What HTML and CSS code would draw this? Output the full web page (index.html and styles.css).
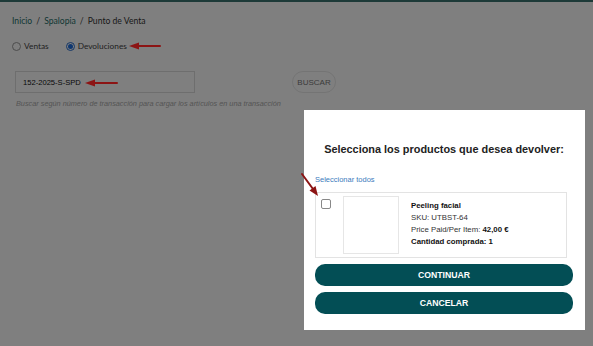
FILE: index.html
```html
<!DOCTYPE html>
<html lang="es">
<head>
<meta charset="utf-8">
<title>Punto de Venta</title>
<link rel="stylesheet" href="styles.css">
</head>
<body>
<div class="topbar"></div>
<main class="page">
  <nav class="crumbs">
    <a href="#">Inicio</a><span class="sep">/</span><a href="#">Spalopia</a><span class="sep">/</span><span class="current">Punto de Venta</span>
  </nav>
  <div class="mode">
    <label class="opt"><input type="radio" name="mode"> Ventas</label>
    <label class="opt"><input type="radio" name="mode" checked> Devoluciones</label>
  </div>
  <div class="search">
    <div class="field">152-2025-S-SPD</div>
    <button class="buscar">BUSCAR</button>
  </div>
  <p class="hint">Buscar según número de transacción para cargar los artículos en una transacción</p>
</main>
<div class="overlay"></div>
<section class="modal">
  <h2 class="title">Selecciona los productos que desea devolver:</h2>
  <a class="select-all" href="#">Seleccionar todos</a>
  <div class="item">
    <input class="check" type="checkbox">
    <div class="thumb"></div>
    <div class="info">
      <div class="name">Peeling facial</div>
      <div>SKU: UTBST-64</div>
      <div>Price Paid/Per Item: <b>42,00 €</b></div>
      <div class="qty">Cantidad comprada: 1</div>
    </div>
  </div>
  <button class="btn">CONTINUAR</button>
  <button class="btn">CANCELAR</button>
</section>
<svg class="annot" width="593" height="346" viewBox="0 0 593 346">
  <g stroke="#8c1414" stroke-width="2" fill="#8c1414" stroke-linecap="round">
    <line x1="160" y1="46" x2="137" y2="46"/>
    <polygon points="129,46 139,42.5 139,49.5" stroke="none"/>
    <line x1="117" y1="83" x2="93" y2="83"/>
    <polygon points="85,83 95,79.5 95,86.5" stroke="none"/>
    <line x1="302" y1="174" x2="313" y2="189"/>
    <polygon points="318,196 309.5,190.5 315.5,186" stroke="none"/>
  </g>
</svg>
</body>
</html>
```
FILE: styles.css
```css
* { box-sizing: border-box; }
html, body { margin: 0; padding: 0; }
body {
  width: 593px;
  height: 346px;
  overflow: hidden;
  background: #fff;
  font-family: "Lato", "Open Sans", sans-serif;
  color: #333;
  position: relative;
}
.topbar { height: 2px; background: #3a7571; }
.page { padding: 13px 12px 0 12px; }
.crumbs { font-size: 8.6px; line-height: 12px; display: flex; align-items: center; }
.crumbs a { color: #256e67; text-decoration: none; }
.crumbs .sep { margin: 0 4px; color: #444; }
.crumbs .current { color: #333; }
.mode { display: flex; gap: 17px; margin-top: 13px; font-size: 8.3px; line-height: 12px; }
.opt { display: flex; align-items: center; gap: 3px; color: #444; }
.opt input {
  appearance: none; -webkit-appearance: none;
  width: 9px; height: 9px; margin: 0;
  border: 1px solid #999; border-radius: 50%; background: #fff;
  position: relative;
}
.opt input:checked { border-color: #2a6fd0; }
.opt input:checked::after {
  content: ""; position: absolute; left: 1px; top: 1px;
  width: 5px; height: 5px; border-radius: 50%; background: #1f6fe0;
}
.search { display: flex; align-items: center; margin-top: 19px; padding-left: 3px; }
.field {
  width: 180px; height: 22px; padding-left: 7px;
  border: 1px solid #dcdcdc; background: #fff;
  font-family: "Liberation Sans", Arial, sans-serif; font-size: 7.6px; color: #111;
  display: flex; align-items: center;
}
.buscar {
  margin-left: 97px; height: 22px; width: 44px; padding: 0;
  border: 1px solid #e8e8e8; border-radius: 11px; background: #fff;
  font-family: "Liberation Sans", Arial, sans-serif; font-size: 8px; color: #777;
}
.hint {
  margin: 6px 0 0 4px;
  font-family: "Liberation Sans", Arial, sans-serif;
  font-size: 7.3px; line-height: 9px; font-style: italic; color: #aaa;
}
.overlay { position: absolute; inset: 0; background: rgba(0,0,0,0.5); }
.modal {
  position: absolute; left: 304px; top: 110px; width: 281px; height: 220px;
  background: #fff; padding: 31px 12px 0 11px;
  font-family: "Liberation Sans", Arial, sans-serif;
  display: flex; flex-direction: column;
}
.title { margin: 0; font-size: 10.9px; line-height: 16px; font-weight: bold; color: #222; text-align: center; white-space: nowrap; }
.select-all { margin-top: 18px; font-size: 7.5px; line-height: 10px; color: #3b7bbd; text-decoration: none; }
.item {
  margin-top: 7px; width: 252px; height: 66px;
  border: 1px solid #e3e3e3;
  display: flex; align-items: flex-start;
  padding: 3px 0 0 5px;
}
.check {
  appearance: none; -webkit-appearance: none;
  width: 10px; height: 10px; margin: 3px 0 0 0;
  border: 1px solid #888; border-radius: 2px; background: #fff;
}
.thumb { width: 56px; height: 58px; margin-left: 12px; border: 1px solid #e6e6e6; }
.info { margin-left: 12px; padding-top: 4px; font-size: 7.8px; line-height: 12px; color: #333; }
.info .name, .info .qty { font-weight: bold; color: #111; }
.info b { color: #111; }
.btn {
  margin-top: 6px; height: 22px; width: 258px; padding: 0; flex: none;
  border: none; border-radius: 10px; background: #034e55; color: #fff;
  font-family: "Liberation Sans", Arial, sans-serif; font-size: 8.7px; font-weight: bold;
}
.annot { position: absolute; left: 0; top: 0; pointer-events: none; }
```
